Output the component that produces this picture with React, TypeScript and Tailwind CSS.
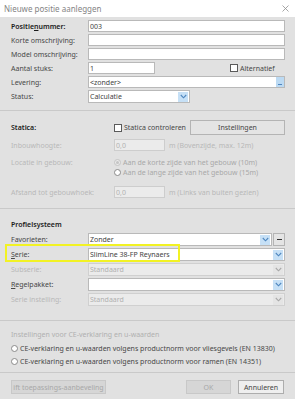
import React from "react"

const font = { fontFamily: '"Noto Sans", "Open Sans", Arial, sans-serif' }

function Arrow({ disabled = false }: { disabled?: boolean }) {
  return (
    <span
      className={`ml-auto mr-[1px] flex h-[10px] w-[10px] items-center justify-center ${
        disabled ? "bg-[#e4e4e4]" : "bg-[#c6e0f6]"
      }`}
    >
      <svg width="7" height="5" viewBox="0 0 7 5">
        <path d="M0.8 1 L3.5 3.8 L6.2 1" fill="none" stroke={disabled ? "#a8a8a8" : "#4f86bf"} strokeWidth="1.1" />
      </svg>
    </span>
  )
}

function Input({ value = "", className = "" }: { value?: string; className?: string }) {
  return (
    <div className={`flex h-[12px] items-center border border-[#b9b9b9] bg-white pl-[1px] text-[#444] ${className}`}>
      {value}
    </div>
  )
}

function DisabledInput({ value }: { value: string }) {
  return (
    <div className="flex h-[12px] w-[51px] items-center border border-[#cdcdcd] bg-[#ebebeb] pl-[1px] text-[#b2b2b2]">
      {value}
    </div>
  )
}

function Select({ value, disabled = false, className = "" }: { value: string; disabled?: boolean; className?: string }) {
  return (
    <div
      className={`flex h-[13px] items-center border pl-[1px] ${
        disabled ? "border-[#d0d0d0] bg-[#ebebeb] text-[#b0b0b0]" : "border-[#b9b9b9] bg-white text-[#444]"
      } ${className}`}
    >
      <span>{value}</span>
      <Arrow disabled={disabled} />
    </div>
  )
}

function Radio({ checked = false, disabled = false }: { checked?: boolean; disabled?: boolean }) {
  return (
    <span
      className={`mr-[2px] flex h-[7px] w-[7px] shrink-0 items-center justify-center rounded-full border ${
        disabled ? "border-[#c4c4c4] bg-[#e9e9e9]" : "border-[#8a8a8a] bg-white"
      }`}
    >
      {checked && <span className="h-[3px] w-[3px] rounded-full bg-[#c4c4c4]" />}
    </span>
  )
}

function Checkbox() {
  return <span className="mr-[2px] inline-block h-[8px] w-[8px] shrink-0 border border-[#5a5a5a] bg-white" />
}

function Row({ label, labelClass = "text-[#474747]", width = "w-[77px]", children }: { label: React.ReactNode; labelClass?: string; width?: string; children: React.ReactNode }) {
  return (
    <div className="flex items-center">
      <div className={`${width} shrink-0 ${labelClass}`}>{label}</div>
      <div className="flex-1">{children}</div>
    </div>
  )
}

export default function App() {
  return (
    <div className="h-[399px] w-[295px] overflow-hidden bg-[#e1e1e1] text-[7px] leading-none" style={font}>
      {/* Title bar */}
      <div className="flex h-[17px] items-center justify-between bg-white pl-[4px] pr-[6px] text-[8px] text-[#848484]">
        <span>Nieuwe positie aanleggen</span>
        <svg width="7" height="7" viewBox="0 0 7 7">
          <path d="M0.5 0.5 L6.5 6.5 M6.5 0.5 L0.5 6.5" stroke="#909090" strokeWidth="0.8" />
        </svg>
      </div>

      {/* Algemeen */}
      <div className="flex flex-col gap-[2px] pl-[11px] pr-[10px] pt-[3px]">
        <Row label={<span className="font-semibold text-[#1a1a1a]">Positie<u>n</u>ummer:</span>}>
          <Input value="003" />
        </Row>
        <Row label="Korte omschrijving:">
          <Input />
        </Row>
        <Row label="Model omschrijving:">
          <Input />
        </Row>
        <Row label="Aantal stuks:">
          <div className="flex items-center">
            <Input value="1" className="w-[67px]" />
            <span className="ml-[75px] flex items-center text-[#474747]">
              <Checkbox />
              Alternatief
            </span>
          </div>
        </Row>
        <Row label="Levering:">
          <div className="flex h-[12px] items-center border border-[#b9b9b9] bg-white pl-[1px] text-[#444]">
            <span>&lt;zonder&gt;</span>
            <span className="ml-auto flex h-[10px] w-[8px] items-end justify-center bg-[#bcdaf3] pb-[2px]">
              <span className="h-[1px] w-[4px] bg-[#4f86bf]" />
            </span>
          </div>
        </Row>
        <Row label="Status:">
          <Select value="Calculatie" className="h-[12px] w-[102px]" />
        </Row>
      </div>

      <div className="mt-[7px] border-t border-[#c9c9c9]" />

      {/* Statica */}
      <div className="flex flex-col pl-[11px] pr-[10px] pt-[9px]">
        <div className="flex h-[15px] items-center">
          <div className="w-[103px] font-semibold text-[#1a1a1a]">Statica:</div>
          <span className="flex items-center text-[#474747]">
            <Checkbox />
            Statica controleren
          </span>
          <button className="ml-auto h-[15px] w-[95px] border border-[#b4b4b4] bg-[#e4e4e4] text-[7px] text-[#444]">
            Instellingen
          </button>
        </div>
        <div className="mt-[4px]">
          <Row label="Inbouwhoogte:" labelClass="text-[#b8b8b8]" width="w-[103px]">
            <div className="flex items-center">
              <DisabledInput value="0,0" />
              <span className="ml-[4px] text-[#b8b8b8]">m (Bovenzijde, max. 12m)</span>
            </div>
          </Row>
        </div>
        <div className="mt-[6px] flex">
          <div className="flex h-[10px] w-[103px] items-center text-[#b8b8b8]">Locatie in gebouw:</div>
          <div className="flex flex-col text-[#a8a8a8]">
            <div className="flex h-[10px] items-center">
              <Radio checked disabled />
              Aan de korte zijde van het gebouw (10m)
            </div>
            <div className="flex h-[10px] items-center">
              <Radio />
              Aan de lange zijde van het gebouw (15m)
            </div>
          </div>
        </div>
        <div className="mt-[9px]">
          <Row label="Afstand tot gebouwhoek:" labelClass="text-[#b8b8b8]" width="w-[103px]">
            <div className="flex items-center">
              <DisabledInput value="0,0" />
              <span className="ml-[4px] text-[#b8b8b8]">m (Links van buiten gezien)</span>
            </div>
          </Row>
        </div>
      </div>

      <div className="mt-[10px] border-t border-[#c9c9c9]" />

      {/* Profielsysteem */}
      <div className="relative flex flex-col pl-[11px] pr-[10px] pt-[10px]">
        <div className="flex h-[10px] items-center font-semibold text-[#1a1a1a]">Profielsysteem</div>
        <div className="mt-[4px] flex flex-col gap-[2px]">
          <Row label="Favorieten:">
            <div className="flex items-center gap-[1px]">
              <Select value="Zonder" className="flex-1" />
              <button className="flex h-[13px] w-[12px] items-center justify-center border border-[#b4b4b4] bg-[#e4e4e4]">
                <span className="h-[1px] w-[5px] bg-[#333]" />
              </button>
            </div>
          </Row>
          <Row label={<span><u>S</u>erie:</span>}>
            <Select value="SlimLine 38-FP Reynaers" />
          </Row>
          <Row label="Subserie:" labelClass="text-[#b8b8b8]">
            <Select value="Standaard" disabled />
          </Row>
          <Row label={<span><u>R</u>egelpakket:</span>}>
            <Select value="" />
          </Row>
          <Row label="Serie instelling:" labelClass="text-[#b8b8b8]">
            <Select value="Standaard" disabled />
          </Row>
        </div>
        {/* highlight */}
        <div className="pointer-events-none absolute left-[5px] top-[35px] h-[18px] w-[175px] border-2 border-[#f2f224]" />
      </div>

      <div className="mt-[14px] border-t border-[#c9c9c9]" />

      {/* CE */}
      <div className="flex flex-col pl-[11px] pr-[10px] pt-[8px] text-[#474747]">
        <div className="flex h-[10px] items-center text-[#b0b0b0]">Instellingen voor CE-verklaring en u-waarden</div>
        <div className="mt-[3px] flex h-[12px] items-center">
          <Radio />
          CE-verklaring en u-waarden volgens productnorm voor vliesgevels (EN 13830)
        </div>
        <div className="mt-[1px] flex h-[12px] items-center">
          <Radio />
          CE-verklaring en u-waarden volgens productnorm voor ramen (EN 14351)
        </div>
      </div>

      <div className="mt-[5px] border-t border-[#c9c9c9]" />

      {/* Buttons */}
      <div className="flex items-center pl-[11px] pr-[11px] pt-[7px]">
        <button className="h-[14px] w-[95px] border border-[#c8c8c8] bg-[#d6d6d6] text-[7px] text-[#a8a8a8]">
          ift toepassings-aanbeveling
        </button>
        <button className="ml-auto h-[14px] w-[45px] border border-[#c8c8c8] bg-[#d6d6d6] text-[7px] text-[#a8a8a8]">
          OK
        </button>
        <button className="ml-[7px] h-[14px] w-[46px] border border-[#adadad] bg-[#efefef] text-[7px] text-[#444]">
          Annuleren
        </button>
      </div>
    </div>
  )
}
